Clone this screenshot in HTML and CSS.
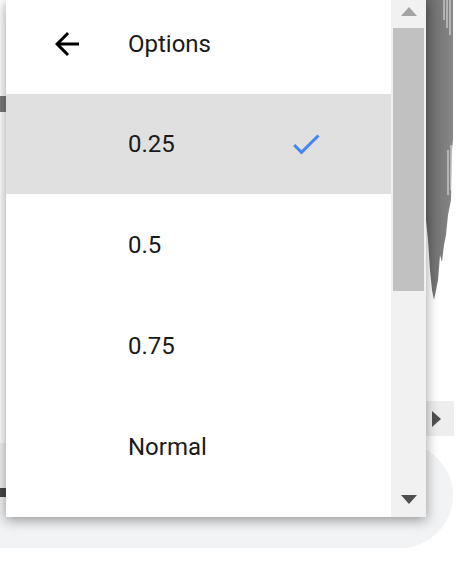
FILE: index.html
```html
<!DOCTYPE html>
<html>
<head>
<meta charset="utf-8">
<link rel="stylesheet" href="styles.css">
</head>
<body>
<div class="stage">
  <svg class="wave" width="30" height="310" viewBox="0 0 30 310">
    <defs>
      <linearGradient id="wg" x1="0" x2="1" y1="0" y2="0">
        <stop offset="0" stop-color="#6a6a6a"/>
        <stop offset="1" stop-color="#878787"/>
      </linearGradient>
    </defs>
    <polygon fill="url(#wg)" points="0,0 27,0 27,140 26,150 25,200 22,215 20,235 18,245 16,262 14,255 12,280 10,290 8,300 6,290 4,270 2,240 0,220"/>
    <path d="M18 0 L18 20 M21 0 L21 28 M24 0 L24 35 M25 145 L25 190 M22 150 L22 195" stroke="#ffffff" stroke-width="1" opacity="0.8"/>
  </svg>
  <div class="blob"></div>
  <div class="hscroll-arrow"><span class="tri-right"></span></div>
  <div class="pill"></div>
  <div class="progress"></div>

  <div class="menu">
    <div class="list">
      <div class="row header">
        <svg class="icon back" width="36" height="36" viewBox="0 0 24 24"><path d="M20 11H7.83l5.59-5.59L12 4l-8 8 8 8 1.41-1.41L7.83 13H20v-2z" fill="#000"/></svg>
        <span class="label">Options</span>
      </div>
      <div class="row selected">
        <span class="label">0.25</span>
        <svg class="icon check" width="36" height="36" viewBox="0 0 24 24"><path d="M9 16.17L4.83 12l-1.42 1.41L9 19 21 7l-1.41-1.41z" fill="#4285f4"/></svg>
      </div>
      <div class="row"><span class="label">0.5</span></div>
      <div class="row"><span class="label">0.75</span></div>
      <div class="row"><span class="label">Normal</span></div>
    </div>
    <div class="vscroll">
      <div class="btn up"><span class="tri-up"></span></div>
      <div class="track"><div class="thumb"></div></div>
      <div class="btn down"><span class="tri-down"></span></div>
    </div>
  </div>
</div>
</body>
</html>
```
FILE: styles.css
```css
html, body {
  margin: 0;
  padding: 0;
  background: #ffffff;
}
.stage {
  position: relative;
  width: 462px;
  height: 561px;
  overflow: hidden;
  font-family: Roboto, "Noto Sans", sans-serif;
}
.wave {
  position: absolute;
  left: 426px;
  top: 0;
}
.blob {
  position: absolute;
  left: 0;
  top: 96px;
  width: 12px;
  height: 16px;
  background: #7a7a7a;
}
.hscroll-arrow {
  position: absolute;
  left: 426px;
  top: 401px;
  width: 28px;
  height: 35px;
  background: #eeeeee;
  display: flex;
  align-items: center;
  padding-left: 6px;
  box-sizing: border-box;
}
.tri-right {
  width: 0;
  height: 0;
  border-top: 8px solid transparent;
  border-bottom: 8px solid transparent;
  border-left: 9px solid #505050;
}
.pill {
  position: absolute;
  left: -100px;
  top: 443px;
  width: 553px;
  height: 105px;
  border-radius: 53px;
  background: #f1f3f4;
}
.progress {
  position: absolute;
  left: 0;
  top: 488px;
  width: 120px;
  height: 9px;
  background: #474747;
}
.menu {
  position: absolute;
  left: 6px;
  top: 0;
  width: 420px;
  height: 517px;
  background: #ffffff;
  display: flex;
  overflow: hidden;
  box-shadow: 0 3px 12px rgba(0, 0, 0, 0.4);
}
.list {
  flex: 1;
  display: flex;
  flex-direction: column;
}
.row {
  flex: 0 0 101px;
  position: relative;
  display: flex;
  align-items: center;
  padding-left: 122px;
  color: #1a1a1a;
  font-size: 24px;
}
.row.header {
  flex-basis: 94px;
  padding-bottom: 7px;
  box-sizing: border-box;
}
.row.selected {
  flex-basis: 100px;
  background: #e0e0e0;
}
.label {
  line-height: 1;
}
.icon {
  position: absolute;
}
.back {
  left: 43px;
  top: 26px;
}
.check {
  left: 282px;
  top: 32px;
}
.vscroll {
  width: 35px;
  background: #f1f1f1;
  display: flex;
  flex-direction: column;
}
.btn {
  flex: 0 0 28px;
  display: flex;
  justify-content: center;
  align-items: center;
}
.btn.up {
  align-items: flex-start;
  padding-top: 7px;
  box-sizing: border-box;
}
.btn.down {
  flex-basis: 28px;
  align-items: flex-start;
  padding-top: 6px;
  box-sizing: border-box;
}
.tri-up {
  width: 0;
  height: 0;
  border-left: 8px solid transparent;
  border-right: 8px solid transparent;
  border-bottom: 9px solid #a3a3a3;
}
.tri-down {
  width: 0;
  height: 0;
  border-left: 8px solid transparent;
  border-right: 8px solid transparent;
  border-top: 9px solid #505050;
}
.track {
  flex: 1;
  padding: 0 2px;
}
.thumb {
  height: 263px;
  background: #c1c1c1;
}
```
